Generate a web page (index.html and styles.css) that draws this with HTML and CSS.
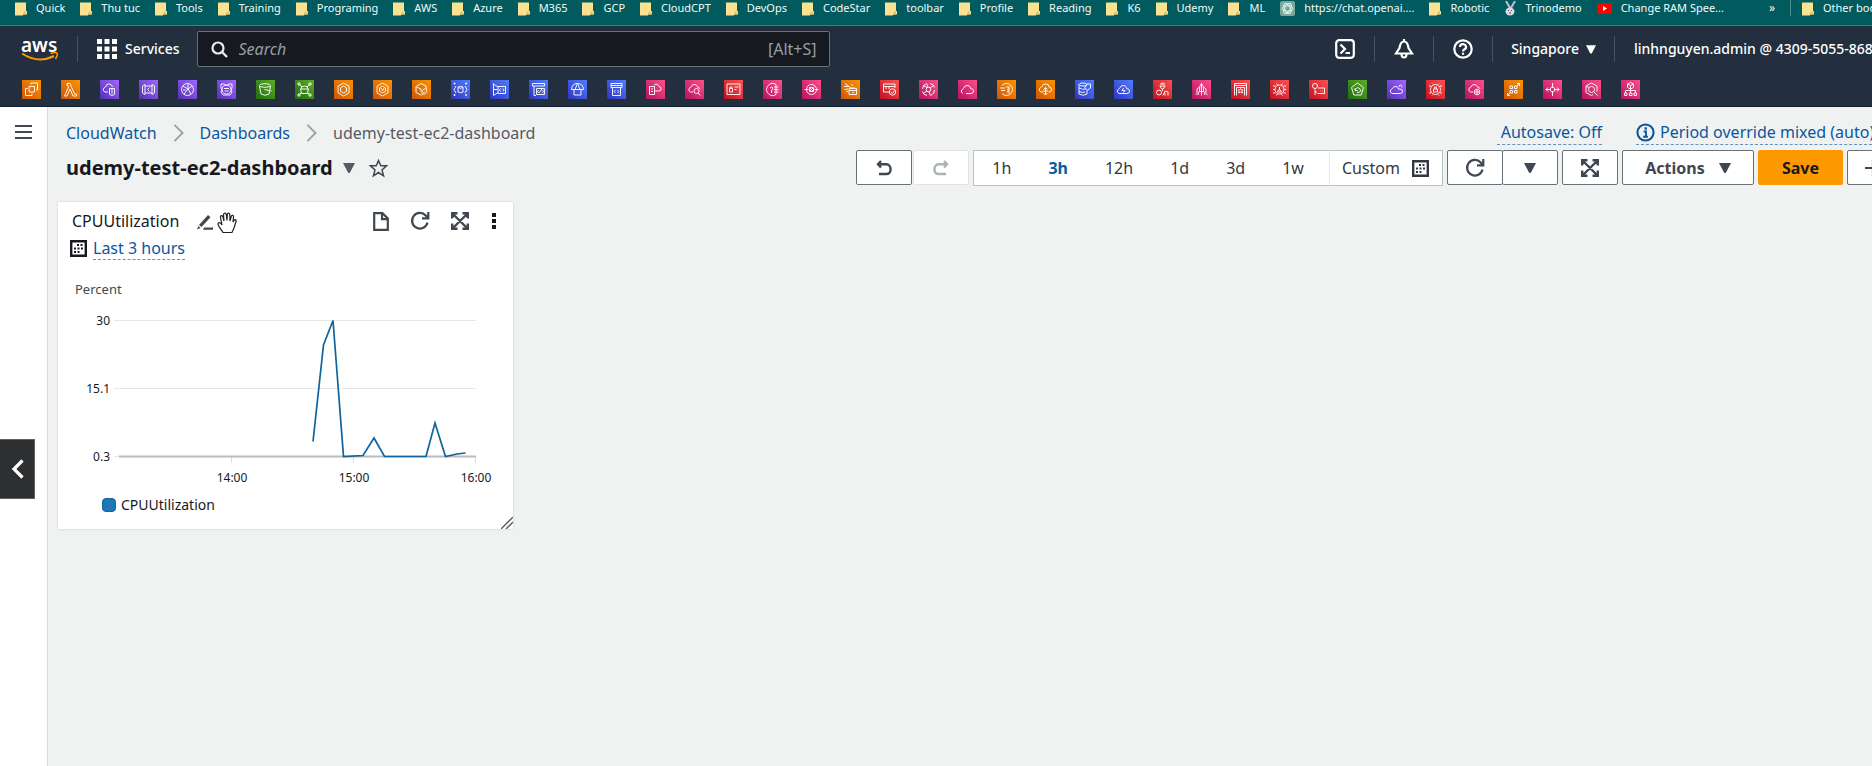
FILE: index.html
```html
<!DOCTYPE html>
<html lang="en">
<head>
<meta charset="utf-8">
<title>udemy-test-ec2-dashboard</title>
<link rel="stylesheet" href="styles.css">
</head>
<body>
<svg class="defs" width="0" height="0" aria-hidden="true">
  <symbol id="folder" viewBox="0 0 12 14"><path d="M0 1h11v8.500h1V13h-4v1H0z" fill="#fbe192"/><path d="M9 10h2v3H8z" fill="#e8c35c"/></symbol>
  <symbol id="caret" viewBox="0 0 12 10"><path d="M0 0h12L7 9.500Q6 10.500 5 9.500z" fill="currentColor"/></symbol>
  <symbol id="refresh" viewBox="0 0 20 20"><path d="M17.500 11.500a7.800 7.800 0 1 1-1.800-7L18 7M18.300 1v6.300h-6.300" fill="none" stroke="currentColor" stroke-width="2.200"/></symbol>
  <symbol id="expand" viewBox="0 0 18 18"><path d="M1.200 6.500V1.200h5.300M11.500 1.200h5.300v5.300M16.800 11.500v5.300h-5.300M6.500 16.800H1.200v-5.300M2 2l14 14M16 2L2 16" fill="none" stroke="currentColor" stroke-width="2.400"/></symbol>
  <symbol id="calendar" viewBox="0 0 17 17"><path d="M1.200 1.200h14.600v14.600H1.200z" fill="none" stroke="currentColor" stroke-width="2.400"/><path d="M7 5h6M4 8.500h9M4 12h6" fill="none" stroke="currentColor" stroke-width="2" stroke-dasharray="2 1.500"/></symbol>
  <symbol id="crumb" viewBox="0 0 11 20"><path d="M1 1l9 9-9 9" fill="none" stroke="currentColor" stroke-width="2"/></symbol>
</svg>

<nav class="bookmarks" aria-label="Bookmarks">
  <div class="bookmark-list">
    <a href="#"><svg><use href="#folder"/></svg>Quick</a>
    <a href="#"><svg><use href="#folder"/></svg>Thu tuc</a>
    <a href="#"><svg><use href="#folder"/></svg>Tools</a>
    <a href="#"><svg><use href="#folder"/></svg>Training</a>
    <a href="#"><svg><use href="#folder"/></svg>Programing</a>
    <a href="#"><svg><use href="#folder"/></svg>AWS</a>
    <a href="#"><svg><use href="#folder"/></svg>Azure</a>
    <a href="#"><svg><use href="#folder"/></svg>M365</a>
    <a href="#"><svg><use href="#folder"/></svg>GCP</a>
    <a href="#"><svg><use href="#folder"/></svg>CloudCPT</a>
    <a href="#"><svg><use href="#folder"/></svg>DevOps</a>
    <a href="#"><svg><use href="#folder"/></svg>CodeStar</a>
    <a href="#"><svg><use href="#folder"/></svg>toolbar</a>
    <a href="#"><svg><use href="#folder"/></svg>Profile</a>
    <a href="#"><svg><use href="#folder"/></svg>Reading</a>
    <a href="#"><svg><use href="#folder"/></svg>K6</a>
    <a href="#"><svg><use href="#folder"/></svg>Udemy</a>
    <a href="#"><svg><use href="#folder"/></svg>ML</a>
    <a href="#"><svg class="fav" viewBox="0 0 15 15"><rect width="15" height="15" rx="2" fill="#79a99b"/><g fill="none" stroke="#e3f3ee"><ellipse cx="7.500" cy="7.500" rx="5.500" ry="2.800"/><ellipse cx="7.500" cy="7.500" rx="5.500" ry="2.800" transform="rotate(60 7.500 7.500)"/><ellipse cx="7.500" cy="7.500" rx="5.500" ry="2.800" transform="rotate(120 7.500 7.500)"/></g></svg>https://chat.openai....</a>
    <a href="#"><svg><use href="#folder"/></svg>Robotic</a>
    <a href="#"><svg viewBox="0 0 12 15"><path d="M2 0l4 7M11 0L7 7" stroke="#c9b8e0" stroke-width="2"/><ellipse cx="6" cy="10.500" rx="4.500" ry="4" fill="#d9dde6"/><path d="M4 9.500h1M7 9.500h1M5 12h2" stroke="#4a4660"/></svg>Trinodemo</a>
    <a href="#"><svg class="fav" viewBox="0 0 15 15"><rect y="2" width="15" height="11" rx="3" fill="#f00"/><path d="M6 5l4 2.500L6 10z" fill="#fff"/></svg>Change RAM Spee...</a>
  </div>
  <button class="more" aria-label="More bookmarks">»</button>
  <a class="other" href="#"><svg><use href="#folder"/></svg>Other bookmarks</a>
</nav>

<header class="console">
  <div class="top">
    <a class="logo" href="#"><span>aws</span>
      <svg viewBox="0 0 38 10"><path d="M1 1.500Q17 12 33 4" fill="none" stroke="#f90" stroke-width="2"/><path d="M29.500 1.500q5-1.500 6.500-.500 1 2-1.500 6" fill="none" stroke="#f90" stroke-width="1.500"/></svg>
    </a>
    <i class="rule"></i>
    <button class="services"><svg viewBox="0 0 20 20"><path d="M0 0h5v5H0zM7.500 0h5v5h-5zM15 0h5v5h-5zM0 7.500h5v5H0zM7.500 7.500h5v5h-5zM15 7.500h5v5h-5zM0 15h5v5H0zM7.500 15h5v5h-5zM15 15h5v5h-5z" fill="#fff"/></svg>Services</button>
    <label class="search">
      <svg viewBox="0 0 17 17"><circle cx="7" cy="7" r="5.500" fill="none" stroke="#e9ebed" stroke-width="2.200"/><path d="M11 11l5 5" stroke="#e9ebed" stroke-width="2.400"/></svg>
      <input type="text" placeholder="Search" aria-label="Search">
      <span>[Alt+S]</span>
    </label>
    <div class="tools">
      <button aria-label="CloudShell"><svg viewBox="0 0 20 20" fill="none" stroke="#fff" stroke-width="2.200"><rect x="1.200" y="1.200" width="17.600" height="17.600" rx="3"/><path d="M5.500 5.500L10 10l-4.500 4.500M10.500 14h4.500"/></svg></button>
      <i class="rule"></i>
      <button aria-label="Notifications"><svg viewBox="0 0 20 20" fill="none" stroke="#fff" stroke-width="2.200"><path d="M10 2.500C6.500 2.500 6 6 5.500 9L2 14.500h16L14.500 9C14 6 13.500 2.500 10 2.500zM7.500 15a2.500 3.500 0 0 0 5 0M10 0v3"/></svg></button>
      <i class="rule"></i>
      <button aria-label="Help"><svg viewBox="0 0 20 20" fill="none" stroke="#fff" stroke-width="2.200"><circle cx="10" cy="10" r="8.700"/><path d="M7 8a3 2.800 0 1 1 4.500 2.300Q10 11 10 12.500M10 13.800v2"/></svg></button>
      <i class="rule"></i>
      <button class="region">Singapore<svg><use href="#caret"/></svg></button>
      <i class="rule"></i>
      <button class="account">linhnguyen.admin @ 4309-5055-8680</button>
    </div>
  </div>
  <nav class="favorites" aria-label="Favorite services">
    <a class="orange" href="#"><svg viewBox="0 0 19 19"><path d="M7 6.500h5.500V12H7zM9 4.500V3h6.500v7H14M5.500 8.500h-2v7H10v-2"/></svg></a>
    <a class="orange" href="#"><svg viewBox="0 0 19 19"><path d="M6 3.500h3l4.500 10.500h2v2h-3.500L9 9l-3 7H3.500L7.500 7 7 5.500H6z"/></svg></a>
    <a class="purple" href="#"><svg viewBox="0 0 19 19"><path d="M8 12H5q-2.500-1-1.500-3.500L5.500 7Q6 3.500 9.500 4q2.500.5 3 3M9.500 8.500h5v6q-2.500 2-5 0zM12 9v5"/></svg></a>
    <a class="purple" href="#"><svg viewBox="0 0 19 19"><path d="M6 4.500L3.500 6v7L6 14.500zM13 4.500L15.500 6v7L13 14.500zM6 6h7M6 13h7M10.500 7.500l-2 2 2 2"/></svg></a>
    <a class="purple" href="#"><svg viewBox="0 0 19 19"><circle cx="9.500" cy="9.500" r="6"/><path d="M5 6l5 3 4-3M6 14l4-5 3 5M10 4v5M5 10h3"/></svg></a>
    <a class="purple" href="#"><svg viewBox="0 0 19 19"><circle cx="9.500" cy="9.500" r="4.500"/><path d="M4 4h3l2.500 1.500L12 4h3v4l-1 2 1 2-2 3h-3l-2 0H6l-2-3 1-2-1-2zM7 8.500h5M7.500 11h4"/></svg></a>
    <a class="green" href="#"><svg viewBox="0 0 19 19"><ellipse cx="9" cy="5.500" rx="5.500" ry="1.800"/><path d="M3.500 6l1.500 8q4 2.500 8 0l1.500-8M8.500 9.500L15.500 11"/></svg></a>
    <a class="green" href="#"><svg viewBox="0 0 19 19"><path d="M3 3h2v2H3zM14 3h2v2h-2zM3 14h2v2H3zM14 14h2v2h-2zM6 9q0-3 3.500-3T13 9M5.500 9h8l-1 4.500h-6zM5 5l2 2M14 5l-2 2M5 14l1.500-1.500M14 14l-1.500-1.500"/></svg></a>
    <a class="orange" href="#"><svg viewBox="0 0 19 19"><path d="M9.500 3l5.500 3.200v6.600L9.500 16 4 12.800V6.200zM9.500 6l3 1.800v3.500l-3 1.700-3-1.700V7.800z"/></svg></a>
    <a class="orange" href="#"><svg viewBox="0 0 19 19"><path d="M9.500 3l5.500 3.200v6.600L9.500 16 4 12.800V6.200zM9.500 6l3 1.800v3.500l-3 1.700-3-1.700V7.800zM8 8l1.500 3L11 8"/></svg></a>
    <a class="orange" href="#"><svg viewBox="0 0 19 19"><path d="M9 15l-5-2.500v-6L9 3.500l5 2.500v2M4.500 7L9 9v2.500M10 13.500q-1-4 4.500-5 1 5-3 6M9.500 15.500l3-4"/></svg></a>
    <a class="blue" href="#"><svg viewBox="0 0 19 19"><path d="M3 3h1v1H3zM14.500 3h1v1h-1zM3 14.500h1v1H3zM14.500 14.500h1v1h-1zM7 7q2.500-1.500 5 0v5q-2.500 1.500-5 0zM7 7.500q2.500 1.500 5 0M5 6L3 9.500 5 13M14 6l2 3.500-2 3.500"/></svg></a>
    <a class="blue" href="#"><svg viewBox="0 0 19 19"><path d="M3.500 3.500v12L8 12.500M3.500 4L8 7M3.500 9.500h4M8 6.500h7.500v7H8zM10.500 8.500L9.500 10l1 1.500M13 8.500l1 1.500-1 1.500"/></svg></a>
    <a class="blue" href="#"><svg viewBox="0 0 19 19"><path d="M3.500 3.500h12v2.500h-12zM5 6v9.500h2M7.500 8.500h8v6h-8zM10 13l3-4M9.500 10L8.500 11.500l1 1.500M13.500 10l1 1.500-1 1.500"/></svg></a>
    <a class="blue" href="#"><svg viewBox="0 0 19 19"><path d="M3.500 9.500Q4 3.500 9.500 3.500t6 6zM9.500 3.500L7 9.500M9.500 3.500l2.500 6M6 9.500v5.500h7V9.500"/></svg></a>
    <a class="blue" href="#"><svg viewBox="0 0 19 19"><path d="M4 3.500h11v4H4zM4 5.500h11M5.500 7.500v8h8v-8M8.500 10L7 11.500 8.500 13M10.500 10l1.500 1.500-1.500 1.500"/></svg></a>
    <a class="pink" href="#"><svg viewBox="0 0 19 19"><path d="M3.500 6.500h5v8h-5zM5 9h2M5 11.500h2M8 5q4-2 5 1.500 3 .5 2 3.500-1 1.500-6 1"/></svg></a>
    <a class="pink" href="#"><svg viewBox="0 0 19 19"><path d="M8 12H5.500Q3 11 4 8.500L6 7q1-3 4-2.500 2 .5 2.500 2.500 2.500.5 2.500 2"/><circle cx="11.500" cy="11" r="2.500"/><path d="M13 13l2.500 2.500"/></svg></a>
    <a class="red" href="#"><svg viewBox="0 0 19 19"><path d="M3 4h13v10.500H3zM5.500 8.500h3V12h-3zM6 8.500V7h2v1.500M10.500 7h4M10.500 9.500h2"/></svg></a>
    <a class="pink" href="#"><svg viewBox="0 0 19 19"><path d="M13 4.500A6 6 0 1 0 13 14.500M7 8q2-2 3 0L8.500 11v2M11 7h4.500M11 9.500h4.500M11 12h4.500M13 4.500v10"/></svg></a>
    <a class="pink" href="#"><svg viewBox="0 0 19 19"><circle cx="9.500" cy="9.500" r="5"/><path d="M2.500 9.500h4M12.500 9.500h4M8 8l3 3M11 8l-3 3M7.500 7.500h4v4h-4z"/></svg></a>
    <a class="orange" href="#"><svg viewBox="0 0 19 19"><path d="M8 8.500h7.500v6H8zM8 10.500h7.500M3 6.500h5l2 1.500h4M4 3.500l4 3M3.500 9.500L7 9M5 12l2-1M11 4v2M11 13l2-1"/></svg></a>
    <a class="red" href="#"><svg viewBox="0 0 19 19"><path d="M9 12H3.500V4H15v4M3.500 6.500H15M6 6.500V9M9 6.500V9"/><circle cx="12.500" cy="12" r="3.200"/><path d="M11 12l1.500 1.500 2-3"/></svg></a>
    <a class="pink" href="#"><svg viewBox="0 0 19 19"><circle cx="9.500" cy="9.500" r="2.300"/><path d="M3.500 9q0-4 4-5.500L9 7M15.500 10q0 4-4 5.500L10 12M5 13l3-2M14 6l-3 2M11 3.500q4 .5 4.500 4M8 15.500q-4-.5-4.500-4M4 5.500l4 2"/></svg></a>
    <a class="pink" href="#"><svg viewBox="0 0 19 19"><path d="M5 13.500Q2.500 12.500 3.500 10l2-1.500Q6.500 5 10 5.500q2.500.500 2.500 3 3 0 3 2.500T13 13.500H8"/></svg></a>
    <a class="orange" href="#"><svg viewBox="0 0 19 19"><path d="M5 5.500a6 6 0 1 1 0 8M3 8h5M4 10.500h4M9 7q3-1 2 2.500t1 4M12 6v7"/></svg></a>
    <a class="orange" href="#"><svg viewBox="0 0 19 19"><path d="M7 12H5Q2.500 11 3.500 8.500L5.500 7Q6.500 3.500 10 4t3 3q3 .500 2.500 3t-3 2M9.500 15V7.500M7.500 9.500l2-2 2 2M7.500 13l2 2 2-2M7 11h5"/></svg></a>
    <a class="blue" href="#"><svg viewBox="0 0 19 19"><ellipse cx="8" cy="4.500" rx="4" ry="1.500"/><path d="M4 4.500v9.500q4 2.500 8 0V11M4 8q4 2 6.500 1M4 11.500q3 1.500 6 .500M12 4h3.500v4L12 10.500l-2-3z"/></svg></a>
    <a class="blue" href="#"><svg viewBox="0 0 19 19"><path d="M5 13.500Q2.500 12.500 3.500 10l2-1.500Q6.500 5 10 5.500q2.500.500 2.500 3 3 0 3 2.500T13 13.500zM9.500 8L8 10.500h3L9.500 12.500"/></svg></a>
    <a class="red" href="#"><svg viewBox="0 0 19 19"><path d="M7 4h5M6.500 6h6M7.500 6q0 3 2 3t2-3M8 4l1.500-1L11 4M9.500 9v2"/><circle cx="6" cy="12.500" r="2.500"/><path d="M10 15.500l2-4.500 3 1v3.500M12 13v2.500"/></svg></a>
    <a class="pink" href="#"><svg viewBox="0 0 19 19"><path d="M9.500 3.500q2.500 2 2 8h-4q-.5-6 2-8zM9.500 3.500v12M7.500 7L5 9v4.500L3.500 15M11.500 7L14 9v4.500l1.500 1.500M7 11.500L6 15M12 11.500l1 3.500"/></svg></a>
    <a class="red" href="#"><svg viewBox="0 0 19 19"><path d="M3.500 15.500v-12h12v12M3.500 5.500h12M5.500 15.500v-8h8v8M9.500 8.500l1 1.500h1.500l-1 1.500.5 1.500-2-1-2 1 .5-1.500-1-1.500h1.500z"/></svg></a>
    <a class="red" href="#"><svg viewBox="0 0 19 19"><circle cx="9.500" cy="9.500" r="4.500"/><path d="M9.500 7v3q2 0 2 2h-4q0-2 2-2M3 6h2.500M3 9.500h2M3 13h2.500M13.500 6H16M14 9.500h2M13.500 13H16M6.500 3.500L7.500 5M12.500 3.500l-1 1.500M6.500 15.500L7.500 14M12.500 15.500l-1-1.500"/></svg></a>
    <a class="red" href="#"><svg viewBox="0 0 19 19"><circle cx="6" cy="6" r="2.500"/><path d="M6 8.500V15M6 12h2M9 8h6.500v5.500H8.500M11 11h.5M13 11h.5"/></svg></a>
    <a class="green" href="#"><svg viewBox="0 0 19 19"><path d="M9.500 3l6 4.500-2.300 7.500H5.800L3.500 7.500zM7 8v2.500h2.500M7 10q2.500-4 5-1t-3 3.500"/></svg></a>
    <a class="purple" href="#"><svg viewBox="0 0 19 19"><path d="M5 13.500Q2.500 12.500 3.500 10l2-1.500Q6.500 6 9 6.500q2 .5 2.500 2.500 4-.5 4 2t-2 2.500zM12 7q0-2 1.500-2T15 7.500"/></svg></a>
    <a class="red" href="#"><svg viewBox="0 0 19 19"><circle cx="9.500" cy="9.500" r="5"/><path d="M7.500 9h4v3h-4zM8.500 9V7h2v2M3 6h2M3 13h2M14 6h2M14 13h2M6 3.500l1 1M13 3.500l-1 1M6 15.500l1-1M13 15.500l-1-1"/></svg></a>
    <a class="pink" href="#"><svg viewBox="0 0 19 19"><path d="M8 12H5.500Q3 11 4 8.500L6 7q1-3 4-2.500 2 .5 2.500 2.500 2.500.5 2.500 2"/><circle cx="12" cy="12" r="2.800"/><path d="M12 10v4M10 12h4"/></svg></a>
    <a class="orange" href="#"><svg viewBox="0 0 19 19"><path d="M6 6h2.500v2.500H6zM10.500 6H13v2.500h-2.500zM6 10.500h2.500V13H6zM10.500 10.500H13V13h-2.500zM13 3.500h2.500V6M15.500 3.500L13 6M6 15.500H3.500V13M3.500 15.500L6 13"/></svg></a>
    <a class="pink" href="#"><svg viewBox="0 0 19 19"><path d="M9.500 3v5M9.500 11v5M3 9.500h4M12 9.500h4M5 7.500L3 9.500l2 2M14 7.500l2 2-2 2M7.500 8l2-1.500 2 1.500v3l-2 1.500-2-1.500z"/></svg></a>
    <a class="pink" href="#"><svg viewBox="0 0 19 19"><path d="M11 14.500L9.500 15.500 4 12.500V6l5.500-3L15 6v5.500M4 6l3 1.500"/><circle cx="9.500" cy="9.500" r="3"/><path d="M12 12l3.500 3.500"/></svg></a>
    <a class="pink" href="#"><svg viewBox="0 0 19 19"><path d="M9.500 2.500L12.500 4v3.500l-3 1.500-3-1.500V4zM6.500 4l3 1.500 3-1.500M9.500 5.500V13M4.500 13v-2.500h10V13M3.500 13h2.500v2.500H3.500zM8.500 13H11v2.500H8.500zM13 13h2.500v2.500H13z"/></svg></a>
  </nav>
</header>

<div class="layout">
  <aside class="rail">
    <button class="menu" aria-label="Open navigation"><svg viewBox="0 0 17 16"><path d="M0 2h17M0 8h17M0 14h17" stroke="#414750" stroke-width="2.200"/></svg></button>
    <button class="drawer" aria-label="Previous"><svg viewBox="0 0 13 20"><path d="M11.500 1.500L3 10l8.500 8.500" fill="none" stroke="#fff" stroke-width="3.200"/></svg></button>
  </aside>
  <main>
    <div class="line crumbs">
      <nav aria-label="Breadcrumb">
        <a href="#">CloudWatch</a><svg><use href="#crumb"/></svg><a href="#">Dashboards</a><svg><use href="#crumb"/></svg><span>udemy-test-ec2-dashboard</span>
      </nav>
      <div class="options">
        <a class="dashed autosave" href="#">Autosave: Off</a>
        <a class="dashed period" href="#"><svg viewBox="0 0 20 20"><circle cx="10" cy="10" r="8.500" fill="none" stroke="currentColor" stroke-width="2.200"/><path d="M8 9h2.500v5M7.500 14.500h5" fill="none" stroke="currentColor" stroke-width="2"/><path d="M9 4.500h2.500V7H9z" fill="currentColor"/></svg>Period override mixed (auto)</a>
      </div>
    </div>
    <div class="line heading">
      <h1>udemy-test-ec2-dashboard</h1>
      <button class="plain" aria-label="Switch dashboard"><svg class="caret"><use href="#caret"/></svg></button>
      <button class="plain star" aria-label="Favorite"><svg viewBox="0 0 18 18"><path d="M9 1.500l2.200 5h5.300l-4.200 3.800 1.500 5.700L9 12.800 4.200 16l1.500-5.700L1.500 6.500h5.300z" fill="none" stroke="#414750" stroke-width="1.400"/></svg></button>
      <div class="toolbar">
        <div class="history">
          <button class="btn" aria-label="Undo"><svg viewBox="0 0 16 16"><path d="M5 1L2 4.200 5 7.500M2 4.200h8.500a4.500 4.500 0 0 1 4 4.500v1.300a4 4 0 0 1-4 4H3" fill="none" stroke="currentColor" stroke-width="2.400"/></svg></button>
          <button class="btn off" disabled aria-label="Redo"><svg viewBox="0 0 16 16"><path d="M11 1L14 4.200 11 7.500M14 4.200H5.500a4.500 4.500 0 0 0-4 4.500v1.300a4 4 0 0 0 4 4H13" fill="none" stroke="currentColor" stroke-width="2.400"/></svg></button>
        </div>
        <div class="range">
          <button>1h</button><button class="on">3h</button><button>12h</button><button>1d</button><button>3d</button><button>1w</button>
          <button class="custom">Custom<svg><use href="#calendar"/></svg></button>
        </div>
        <div class="split">
          <button class="btn" aria-label="Refresh"><svg class="lg"><use href="#refresh"/></svg></button>
          <button class="btn" aria-label="Refresh options"><svg class="caret"><use href="#caret"/></svg></button>
        </div>
        <button class="btn" aria-label="Full screen"><svg class="md"><use href="#expand"/></svg></button>
        <button class="btn actions">Actions<svg class="caret"><use href="#caret"/></svg></button>
        <button class="btn save">Save</button>
        <button class="btn add" aria-label="Add widget"><svg viewBox="0 0 16 16"><path d="M0 8h16M8 0v16" stroke="currentColor" stroke-width="2.200"/></svg></button>
      </div>
    </div>
    <div class="board">
      <section class="widget">
        <div class="widget-head">
          <h2>CPUUtilization</h2>
          <button class="plain edit" aria-label="Rename"><svg viewBox="0 0 17 17"><path d="M3 12L12 2l2.500 2.200L5.500 14z" fill="#414750"/><path d="M2.500 13L1 16.500l3.500-1.500zM8 14.500h9v2.200H7z" fill="#414750"/></svg></button>
          <div class="widget-tools">
            <button class="plain" aria-label="Logs"><svg class="doc" viewBox="0 0 16 19"><path d="M1.200 1.200h8.300l5.300 5.300v11.300H1.200zM9 1.500v5.700h5.500" fill="none" stroke="currentColor" stroke-width="2.200"/></svg></button>
            <button class="plain" aria-label="Refresh widget"><svg class="lg"><use href="#refresh"/></svg></button>
            <button class="plain" aria-label="Enlarge"><svg class="md"><use href="#expand"/></svg></button>
            <button class="plain kebab" aria-label="Widget actions"><svg class="dots" viewBox="0 0 4 16"><path d="M0 0h4v4H0zM0 6h4v4H0zM0 12h4v4H0z" fill="#16191f"/></svg></button>
          </div>
          <svg class="hand" viewBox="0 0 20 22"><path d="M6 20.500C4 17 1 14 1 12s2-2 4 1L3.500 5.500C3.300 3 5.500 3 6 5l1 4-.5-6c0-2.500 2.500-2.500 2.800-.3L10 8.500l.3-6c.3-2 2.500-1.700 2.500.3L13 9l1.300-4.700c.7-1.800 2.500-1 2.200.7L16 10l1-1.500c1-1.500 2.500-.5 2 1L17 16l-2 4.500z" fill="#fff" stroke="#222" stroke-width="1.200"/></svg>
        </div>
        <div class="period-row"><svg><use href="#calendar"/></svg><a class="dashed" href="#">Last 3 hours</a></div>
        <svg class="chart" viewBox="0 0 455 220" role="img" aria-label="CPUUtilization, percent">
          <text class="unit" x="17" y="25">Percent</text>
          <path d="M56 51.500h362M56 119.500h362M56 187.500h362" stroke="#e6e6e6"/>
          <path d="M173.500 188v6M295.500 188v6M417.500 188v6" stroke="#ddd"/>
          <path d="M61 187.500h357" stroke="#bbb" stroke-width="2"/>
          <g class="tick end"><text x="52" y="56">30</text><text x="52" y="124">15.1</text><text x="52" y="192">0.3</text></g>
          <g class="tick mid"><text x="174" y="213">14:00</text><text x="296" y="213">15:00</text><text x="418" y="213">16:00</text></g>
          <path d="M255 172.500L265.500 76 275 51.500 285.500 187.500 305 186.500 316 169 326.500 187.500H368L377 154 387.500 187.500 399 185 407.500 184" fill="none" stroke="#0f649d" stroke-width="1.700"/>
        </svg>
        <div class="legend"><i></i>CPUUtilization</div>
        <svg class="resize" viewBox="0 0 12 12"><path d="M0 12L12 0M5 12l7-7" stroke="#555" stroke-width="1.300"/></svg>
      </section>
    </div>
  </main>
</div>
</body>
</html>
```
FILE: styles.css
```css
* { box-sizing: border-box; }
body { margin: 0; min-height: 100vh; display: flex; flex-direction: column; overflow: hidden; background: #f0f2f2; color: #16191f; font: 16px/20px "Noto Sans", "Open Sans", sans-serif; }
button, input { font: inherit; color: inherit; margin: 0; padding: 0; border: 0; background: none; }
button { display: flex; align-items: center; justify-content: center; white-space: nowrap; }
a { color: #0a56a0; text-decoration: none; white-space: nowrap; }
svg { display: block; flex: none; }
.defs { position: absolute; }

.bookmarks { display: flex; align-items: flex-start; height: 26px; padding-left: 15px; background: #015a5e; border-bottom: 1px solid #3f7f86; font-size: 11px; line-height: 16px; color: #f2fafa; }
.bookmark-list { flex: 1; display: flex; justify-content: space-between; }
.bookmarks a { display: flex; align-items: center; gap: 9px; color: inherit; }
.bookmarks svg { width: 12px; height: 15px; }
.bookmarks svg.fav { width: 15px; }
.more { width: 24px; margin-left: 36px; font-size: 12px; line-height: 15px; }
.bookmarks .other { margin-left: 6px; padding-left: 11px; width: 82px; border-left: 1px solid #4c8e90; }

.console { background: #232f3e; color: #fff; border-bottom: 1px solid #10202e; }
.top { display: flex; align-items: center; height: 46px; padding-left: 21px; font-size: 14px; font-weight: 500; }
.logo { width: 38px; color: #fff; font-size: 19px; font-weight: 600; line-height: 16px; }
.logo span { display: block; height: 15px; }
.logo svg { width: 38px; height: 10px; }
.rule { width: 1px; height: 26px; background: #48525f; flex: none; }
.logo + .rule { margin: 0 19px 0 18px; }
.services { gap: 8px; }
.services svg, .tools svg { width: 20px; height: 20px; }
.search { flex: 0 1 633px; display: flex; align-items: center; height: 36px; margin-left: 17px; padding: 0 12px; border: 1px solid #687078; border-radius: 2px; background: #16191f; color: #95a0a8; font-size: 16px; font-weight: 400; }
.search svg { width: 17px; height: 17px; margin: 0 11px 0 1px; }
.search input { flex: 1; min-width: 0; outline: 0; }
.search input::placeholder { color: #95a0a8; font-style: italic; opacity: 1; }
.tools { display: flex; align-items: center; gap: 19px; margin-left: auto; }
.tools .region { gap: 7px; margin: 0 -1px; }
.tools .region svg { width: 10px; height: 9px; }
.account { width: 238px; justify-content: flex-start; overflow: hidden; }

.favorites { display: flex; gap: 20px; padding: 8px 22px 7px; }
.favorites a { width: 19px; height: 19px; flex: none; }
.favorites svg { width: 19px; height: 19px; fill: none; stroke: #fff; stroke-width: 1; opacity: .92; }
.orange { background: linear-gradient(45deg, #cf560b, #fb9300); }
.purple { background: linear-gradient(45deg, #5330b5, #a266ff); }
.green { background: linear-gradient(45deg, #1f6d0f, #5eac27); }
.blue { background: linear-gradient(45deg, #2f33c0, #527fff); }
.pink { background: linear-gradient(45deg, #b3135f, #ff4f8b); }
.red { background: linear-gradient(45deg, #be1020, #ff5252); }

.layout { flex: 1; display: flex; }
.rail { width: 48px; flex: none; padding-top: 17px; background: #fff; border-right: 1px solid #d8dcde; }
.menu { width: 47px; }
.menu svg { width: 17px; height: 16px; }
.drawer { width: 35px; height: 60px; margin-top: 299px; background: #2d2f31; border: 1px solid #5a6266; border-left: 0; }
.drawer svg { width: 13px; height: 20px; }
main { flex: 1; min-width: 0; overflow: hidden; padding-left: 10px; }
.line { display: flex; align-items: center; }
.crumbs { height: 43px; padding: 8px 0 0 8px; justify-content: space-between; }
.crumbs nav { display: flex; align-items: center; gap: 16px; color: #545b64; }
.crumbs nav svg { width: 11px; height: 18px; color: #98a2a6; }
.options { display: flex; gap: 34px; }
.dashed { border-bottom: 1px dashed #5f93bd; }
.autosave { padding-left: 4px; line-height: 24px; }
.period { display: flex; align-items: center; gap: 5px; width: 236px; }
.period svg { width: 19px; height: 19px; }
.heading { padding-left: 8px; height: 36px; }
h1, h2 { margin: 0; font-weight: 400; }
h1 { font-size: 20px; font-weight: 700; line-height: 28px; }
.heading .plain { margin-left: 10px; color: #545b64; }
.heading .star { margin-left: 14px; }
.star svg { width: 19px; height: 19px; }
.caret { width: 12px; height: 10px; }
.lg { width: 20px; height: 20px; }
.md { width: 18px; height: 18px; }
.toolbar { display: flex; gap: 4px; margin-left: auto; color: #414750; }
.history { display: flex; gap: 1px; }
.btn { width: 56px; height: 35px; border: 1px solid #687078; border-radius: 2px; background: #fff; color: #414750; font-weight: 700; }
.history svg, .add svg { width: 16px; height: 16px; }
.off { border-color: #e0e4e5; color: #aab3b5; }
.range { display: flex; gap: 1px; height: 36px; border: 1px solid #b8c2c4; background: #fff; }
.range button { padding: 0 18px; color: #33383f; }
.range .on { color: #0a5c9e; font-weight: 700; }
.range .custom { gap: 12px; margin-left: 6px; padding: 0 13px 0 12px; border-left: 1px solid #e6e9ea; }
.range svg { width: 17px; height: 17px; }
.split { display: flex; }
.split .btn + .btn { margin-left: -1px; }
.actions { width: 132px; gap: 14px; }
.save { width: 85px; background: #f90; border-color: #f90; color: #16191f; }
.add { width: 52px; margin-right: -27px; }

.board { display: grid; grid-template-columns: repeat(4, 1fr); padding-top: 16px; margin-right: -6px; }
.widget { position: relative; background: #fff; box-shadow: 0 0 2px rgba(0, 28, 36, .18); }
.widget-head { position: relative; display: flex; align-items: center; height: 34px; padding: 4px 17px 0 14px; }
h2 { font-size: 16px; line-height: 20px; }
.edit { margin-left: 17px; }
.edit svg { width: 17px; height: 17px; }
.widget-tools { display: flex; align-items: center; gap: 21px; margin-left: auto; color: #414750; }
.kebab { padding-left: 2px; }
.doc { width: 16px; height: 19px; }
.dots { width: 4px; height: 16px; }
.hand { position: absolute; left: 159px; top: 10px; width: 20px; height: 22px; }
.period-row { display: flex; align-items: center; gap: 6px; height: 25px; padding-left: 12px; }
.period-row svg { width: 17px; height: 17px; color: #16191f; }
.period-row .dashed { line-height: 22px; }
.chart { width: 100%; height: auto; margin-top: 8px; font-size: 12px; fill: #16191f; }
.unit { font-size: 13px; fill: #414750; }
.end { text-anchor: end; }
.mid { text-anchor: middle; }
.legend { display: flex; align-items: center; gap: 5px; padding: 6px 0 14px 44px; font-size: 14px; }
.legend i { width: 14px; height: 14px; border-radius: 4px; background: #1f77b4; border: 1px solid #0f649d; }
.resize { position: absolute; right: 0; bottom: 0; width: 12px; height: 12px; }
```
